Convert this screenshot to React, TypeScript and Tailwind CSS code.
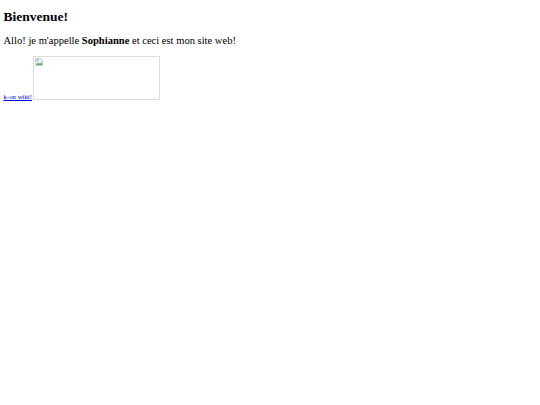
import React from 'react';

export default function App() {
  return (
    <div className="min-h-[405px] bg-white px-[3.5px] pt-[9px] text-black font-['Liberation_Serif',serif]">
      <h1 className="text-[13.5px] leading-[16px] font-bold">Bienvenue!</h1>
      <p className="mt-[9px] text-[10.55px] leading-[14px]">
        Allo! je m'appelle <b>Sophianne</b> et ceci est mon site web!
      </p>
      <div className="mt-[8px] flex items-end">
        <a href="#" className="mb-[-1px] text-[6.8px] leading-[8px] text-[#0000ee] underline">k-on wiki!</a>
        <a href="#" className="ml-[0.5px] block h-[43.5px] w-[127px] border border-[#dcdcdc] p-px">
          {/* icone d'image cassee */}
          <svg width="8" height="8" viewBox="0 0 9 9" className="block">
            <path d="M0.5 0.5H6L8.5 3V8.5H0.5Z" fill="#e8edf5" stroke="#a9b0bb" strokeWidth="0.7" />
            <path d="M1 8L3.5 5L5 6.5L8 5V8Z" fill="#6aa85c" />
            <path d="M1.5 1.5H4V3.5H1.5Z" fill="#9fc0ea" />
          </svg>
        </a>
      </div>
    </div>
  );
}
